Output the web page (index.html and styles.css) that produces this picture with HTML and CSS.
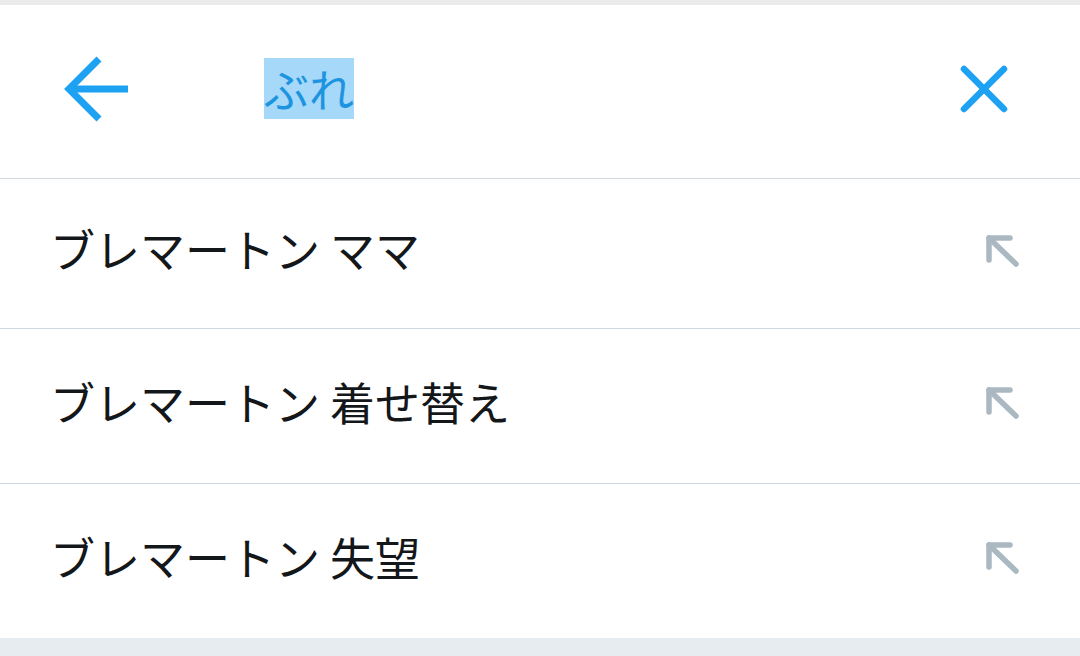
FILE: index.html
```html
<!DOCTYPE html>
<html lang="ja">
<head>
<meta charset="utf-8">
<link rel="stylesheet" href="styles.css">
</head>
<body>
<div class="topstrip"></div>
<header class="search-bar">
  <svg class="back" width="70" height="70" viewBox="0 0 70 70">
    <polyline points="39,5 9,35 39,65" fill="none" stroke="#1da1f2" stroke-width="7" stroke-linejoin="miter"/>
    <line x1="9" y1="35" x2="68" y2="35" stroke="#1da1f2" stroke-width="7"/>
  </svg>
  <div class="query"><span class="sel">ぶれ</span></div>
  <svg class="close" width="60" height="60" viewBox="0 0 60 60">
    <line x1="10" y1="10" x2="50" y2="50" stroke="#1da1f2" stroke-width="6.5" stroke-linecap="round"/>
    <line x1="50" y1="10" x2="10" y2="50" stroke="#1da1f2" stroke-width="6.5" stroke-linecap="round"/>
  </svg>
</header>
<ul class="suggestions">
  <li class="item first">
    <span class="label">ブレマートン ママ</span>
    <svg class="fill" width="44" height="44" viewBox="0 0 44 44">
      <polyline points="30,8 9,8 9,30" fill="none" stroke="#aab8c2" stroke-width="5.5" stroke-linecap="round" stroke-linejoin="round"/>
      <line x1="9" y1="8" x2="36" y2="34" stroke="#aab8c2" stroke-width="5.5" stroke-linecap="round"/>
    </svg>
  </li>
  <li class="item mid">
    <span class="label">ブレマートン 着せ替え</span>
    <svg class="fill" width="44" height="44" viewBox="0 0 44 44">
      <polyline points="30,8 9,8 9,30" fill="none" stroke="#aab8c2" stroke-width="5.5" stroke-linecap="round" stroke-linejoin="round"/>
      <line x1="9" y1="8" x2="36" y2="34" stroke="#aab8c2" stroke-width="5.5" stroke-linecap="round"/>
    </svg>
  </li>
  <li class="item last">
    <span class="label">ブレマートン 失望</span>
    <svg class="fill" width="44" height="44" viewBox="0 0 44 44">
      <polyline points="30,8 9,8 9,30" fill="none" stroke="#aab8c2" stroke-width="5.5" stroke-linecap="round" stroke-linejoin="round"/>
      <line x1="9" y1="8" x2="36" y2="34" stroke="#aab8c2" stroke-width="5.5" stroke-linecap="round"/>
    </svg>
  </li>
</ul>
</body>
</html>
```

FILE: styles.css
```css
html, body {
  margin: 0;
  padding: 0;
}
body {
  background: #e6ecf0;
  font-family: "Noto Sans CJK JP", "Noto Sans", sans-serif;
  width: 1080px;
  height: 656px;
  overflow: hidden;
}
.topstrip {
  height: 5px;
  background: #ebebeb;
}
.search-bar {
  height: 174px;
  box-sizing: border-box;
  padding: 0 66px 6px 60px;
  background: #fff;
  border-bottom: 1px solid #cfd9de;
  display: flex;
  align-items: center;
}
.back {
  display: block;
  flex: none;
}
.query {
  flex: 1;
  padding-left: 134px;
  display: flex;
  align-items: center;
}
.sel {
  background: #a5d8f9;
  color: #1d94df;
  font-size: 45px;
  line-height: 61px;
  height: 61px;
  display: inline-block;
}
.close {
  display: block;
  flex: none;
}
.suggestions {
  list-style: none;
  margin: 0;
  padding: 0;
  background: #fff;
}
.item {
  box-sizing: border-box;
  display: flex;
  align-items: center;
  justify-content: space-between;
  padding: 0 56px 0 50px;
  border-bottom: 1px solid #cfd9de;
}
.item.first {
  height: 150px;
}
.item.mid {
  height: 155px;
}
.item.last {
  border-bottom: none;
  height: 154px;
}
.label {
  font-size: 45px;
  color: #14171a;
  line-height: 1;
  margin-bottom: 10px;
}
.fill {
  display: block;
  flex: none;
  margin-bottom: 4px;
}
```
